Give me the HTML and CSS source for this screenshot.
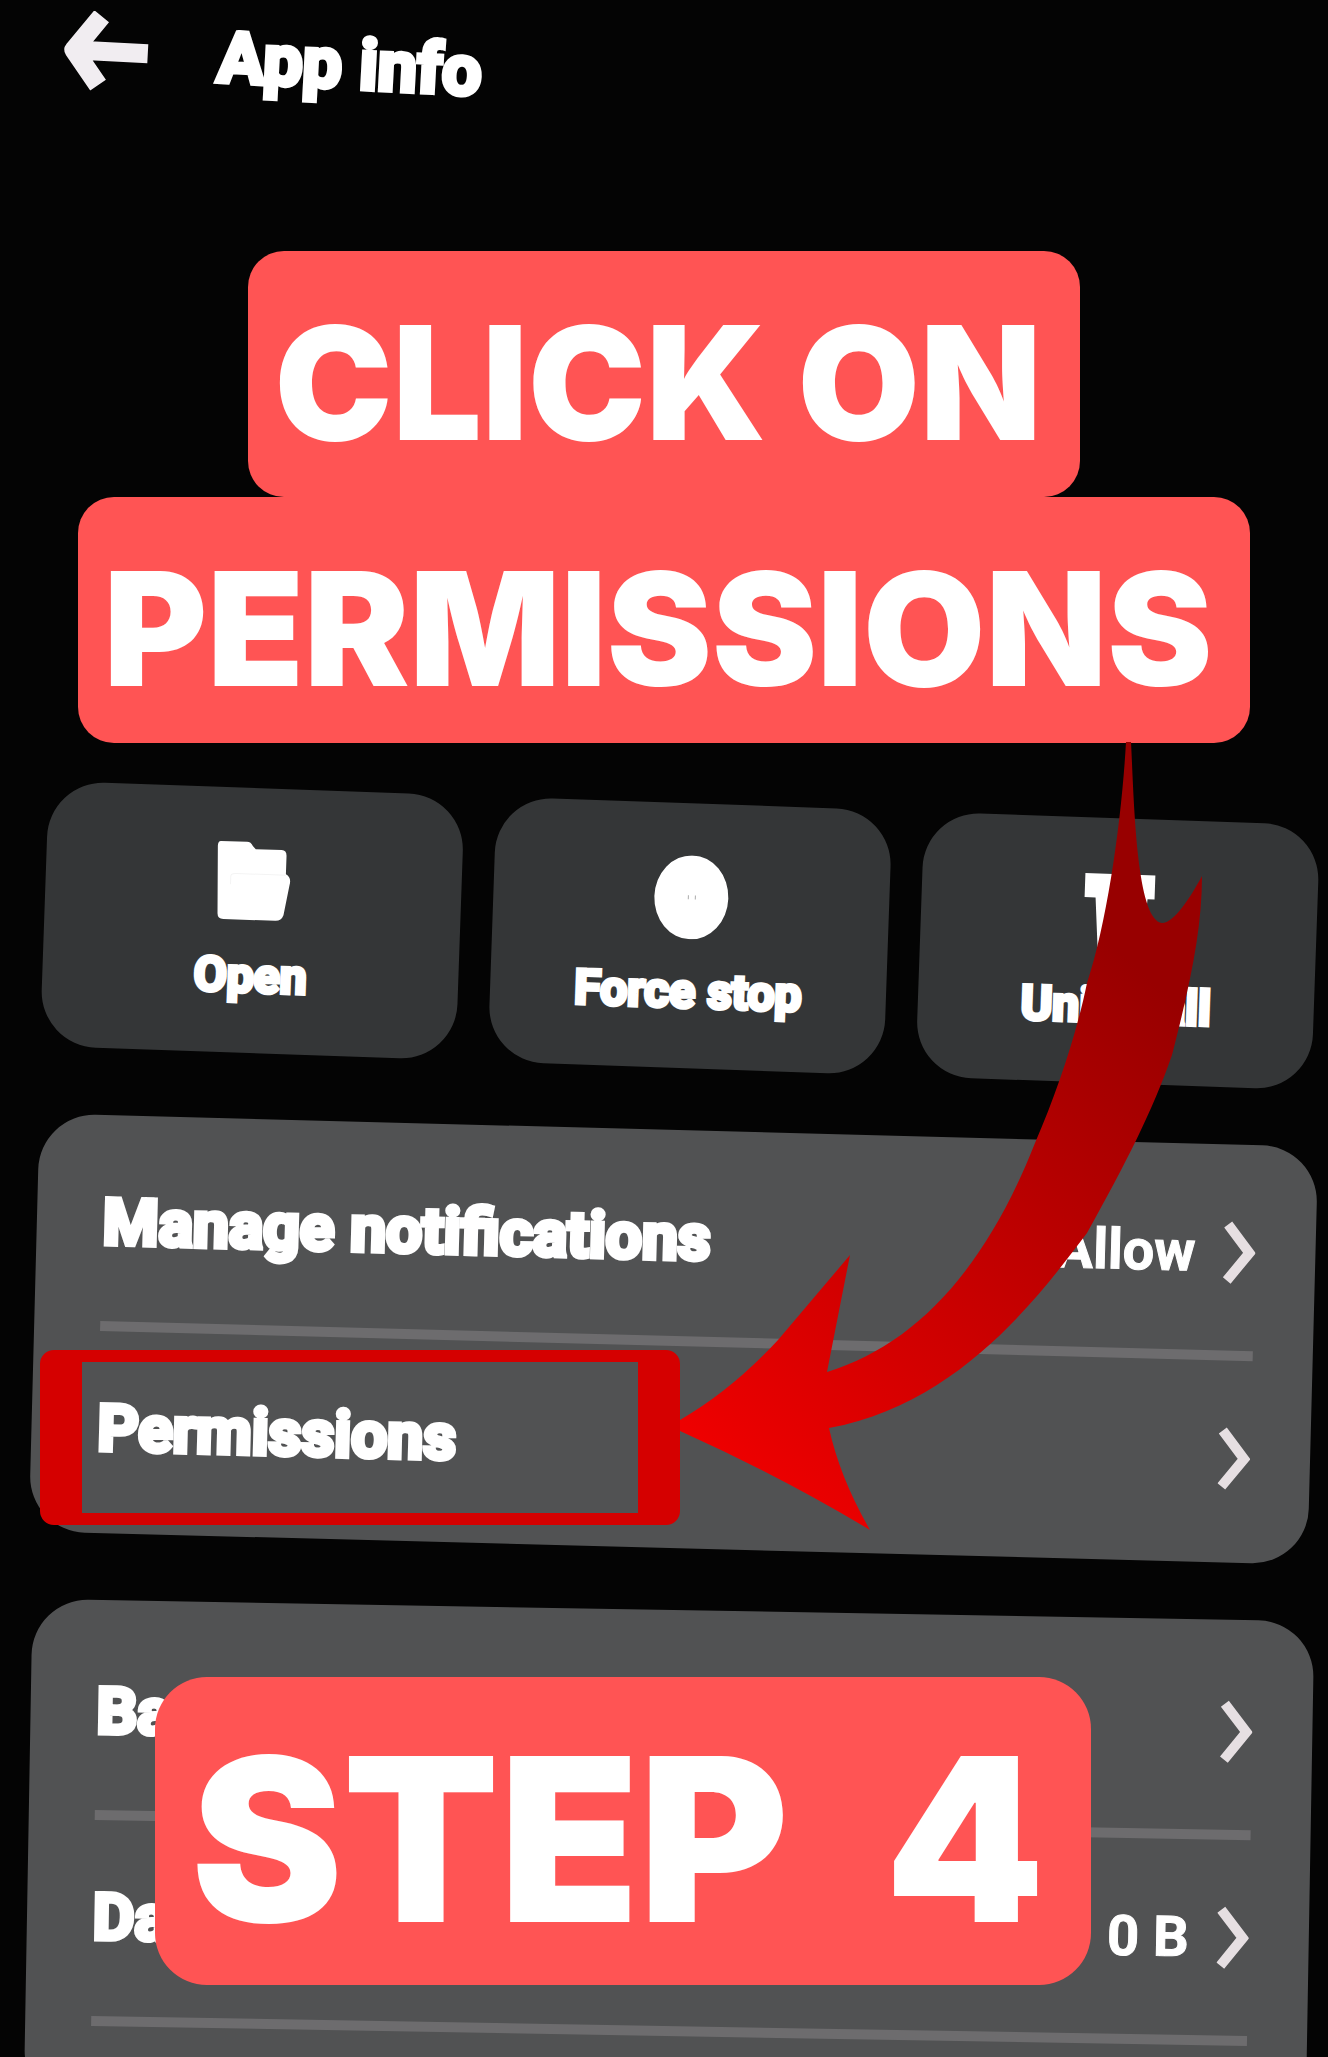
FILE: index.html
```html
<!doctype html>
<html lang="en">
<head>
    <meta charset="UTF-8">
    <meta name="viewport" content="width=device-width, initial-scale=1.0">
    <title>Step 4 - Click on permissions</title>
    <link rel="stylesheet" href="styles.css">
</head>
<body>
    <main class="screen">
        <header class="app-header">
            <button class="back" aria-label="Back">
                <svg width="88" height="80" viewBox="0 0 88 80">
                    <path d="M36 5 L10 40 L36 74 M12 40 H84" fill="none" stroke="#f1edf1" stroke-width="19" stroke-linejoin="round"/>
                </svg>
            </button>
            <h1>App info</h1>
        </header>

        <div class="banner">
            <span class="banner-line">CLICK ON</span>
            <span class="banner-line">PERMISSIONS</span>
        </div>

        <div class="actions">
            <button class="action">
                <svg width="76" height="84" viewBox="0 0 76 84">
                    <path d="M4 2 H30 Q34 2 36 6 L39 9 H65 Q70 9 70 15 V33 Q76 36 74 44 L69 74 Q67 80 61 80 H9 Q3 80 3 74 L1 7 Q1 2 4 2Z" fill="#fff"/>
                    <path d="M15 45 V37 Q15 34 20 34 H70" fill="none" stroke="#f4f4f4" stroke-width="1"/>
                </svg>
                Open
            </button>
            <button class="action">
                <svg width="76" height="84" viewBox="0 0 76 84">
                    <ellipse cx="38" cy="42" rx="37" ry="42" fill="#fff"/>
                    <path d="M35 40 V44 M42 40 V44" stroke="#aaa" stroke-width="1"/>
                </svg>
                Force stop
            </button>
            <button class="action">
                <svg width="76" height="84" viewBox="0 0 76 84">
                    <path d="M3 4 H73 V28 H66 L62 82 H18 L14 28 H3Z" fill="#fff"/>
                </svg>
                Uninstall
            </button>
        </div>

        <section class="card">
            <a class="row" href="#notifications">
                <span>Manage notifications</span>
                <span class="value">Allow</span>
                <svg class="chevron" width="32" height="64" viewBox="0 0 32 64"><path d="M4 4 L26 32 L4 60"/></svg>
            </a>
            <a class="row" href="#permissions">
                <span>Permissions</span>
                <svg class="chevron" width="32" height="64" viewBox="0 0 32 64"><path d="M4 4 L26 32 L4 60"/></svg>
            </a>
        </section>

        <section class="card card-last">
            <a class="row" href="#ba">
                <span>Ba</span>
                <svg class="chevron" width="32" height="64" viewBox="0 0 32 64"><path d="M4 4 L26 32 L4 60"/></svg>
            </a>
            <a class="row" href="#da">
                <span>Da</span>
                <span class="value">0 B</span>
                <svg class="chevron" width="32" height="64" viewBox="0 0 32 64"><path d="M4 4 L26 32 L4 60"/></svg>
            </a>
        </section>

        <!-- Annotations on top of the screen -->
        <div class="highlight"></div>

        <svg class="pointer" width="524" height="790" viewBox="680 742 524 790">
            <defs>
                <linearGradient id="red" gradientUnits="userSpaceOnUse" x1="700" y1="1440" x2="1130" y2="960">
                    <stop offset="0" stop-color="#ee0000"/>
                    <stop offset="1" stop-color="#980000"/>
                </linearGradient>
            </defs>
            <path fill="url(#red)" d="M1126 742 C1122 815 1108 920 1087 983 C1077 1032 1058 1090 1035 1143 C985 1270 915 1345 827 1372 L850 1255 L778 1340 Q732 1390 680 1420 V1431 Q780 1476 870 1530 Q840 1478 829 1428 C960 1404 1040 1295 1087 1233 C1125 1165 1153 1110 1172 1055 C1190 985 1202 930 1202 876 C1190 898 1174 923 1162 923 C1136 920 1134 800 1131 742Z"/>
        </svg>

        <div class="step"><span>STEP</span> <span>4</span></div>
    </main>
</body>
</html>
```
FILE: styles.css
```css
* {
    box-sizing: border-box;
}

body {
    margin: 0;
    background: #040404;
    color: white;
    font-family: Roboto, sans-serif;
    font-weight: bold;
}

button {
    border: none;
    background: none;
    color: inherit;
    font: inherit;
    cursor: pointer;
}

.screen {
    position: relative;
    display: flex;
    flex-direction: column;
    min-height: 100vh;
    overflow: hidden;
}

/* Top bar */
.app-header {
    display: flex;
    align-items: center;
    gap: 66px;
    height: 92px;
    margin-bottom: 159px;
    padding-left: 64px;
    transform: rotate(3deg);
    transform-origin: left center;
}

.back {
    padding: 0;
    line-height: 0;
}

h1 {
    margin: 0;
    font-size: 70px;
    line-height: 80px;
    -webkit-text-stroke: 5px white;
}

/* Red title */
.banner {
    display: flex;
    flex-direction: column;
    align-items: center;
    margin-bottom: 60px;
    font-family: Inter, sans-serif;
    font-size: 158px;
    font-weight: 900;
    line-height: 228px;
}

.banner-line {
    padding: 18px 38px 0 26px;
    border-radius: 36px;
    background: #ff5454;
}

/* Open / Force stop / Uninstall */
.actions {
    display: grid;
    grid-template-columns: 21fr 20fr 20fr;
    gap: 32px;
    margin: 0 12px 62px 44px;
    transform: rotate(2deg);
}

.action {
    display: flex;
    flex-direction: column;
    align-items: center;
    gap: 20px;
    padding: 52px 0 45px;
    border-radius: 56px;
    background: #343637;
    font-size: 48px;
    line-height: 64px;
    -webkit-text-stroke: 4px white;
}

/* Setting lists */
.card {
    margin: 0 15px 62px 34px;
    padding: 10px 60px 6px 66px;
    border-radius: 56px;
    background: #515253;
    transform: rotate(1.5deg);
}

.card-last {
    flex: 1;
    margin: 0 18px -60px 28px;
    padding-top: 14px;
    transform: rotate(1deg);
}

.row {
    display: flex;
    align-items: center;
    gap: 28px;
    padding: 58px 0;
    border-bottom: 10px solid #6d6c6e;
    color: white;
    font-size: 64px;
    line-height: 80px;
    text-decoration: none;
    -webkit-text-stroke: 5px white;
}

.card:not(.card-last) .row:last-child {
    border-bottom: none;
}

.value {
    margin-left: auto;
    font-size: 56px;
    -webkit-text-stroke: 1px white;
}

.chevron {
    flex: none;
    fill: none;
    stroke: #e6dfe2;
    stroke-width: 10px;
}

.row > span:first-child + .chevron {
    margin-left: auto;
}

/* Box round the permissions row */
.highlight {
    position: absolute;
    top: 1350px;
    left: 40px;
    width: 640px;
    height: 175px;
    border: solid #d50000;
    border-width: 12px 42px;
    border-radius: 14px;
}

.pointer {
    position: absolute;
    top: 742px;
    left: 680px;
}

.step {
    position: absolute;
    top: 1677px;
    left: 155px;
    display: flex;
    gap: 96px;
    padding: 16px 46px 0 36px;
    border-radius: 52px;
    background: #ff5454;
    font-family: Inter, sans-serif;
    font-size: 228px;
    font-weight: 900;
    line-height: 292px;
}
```
